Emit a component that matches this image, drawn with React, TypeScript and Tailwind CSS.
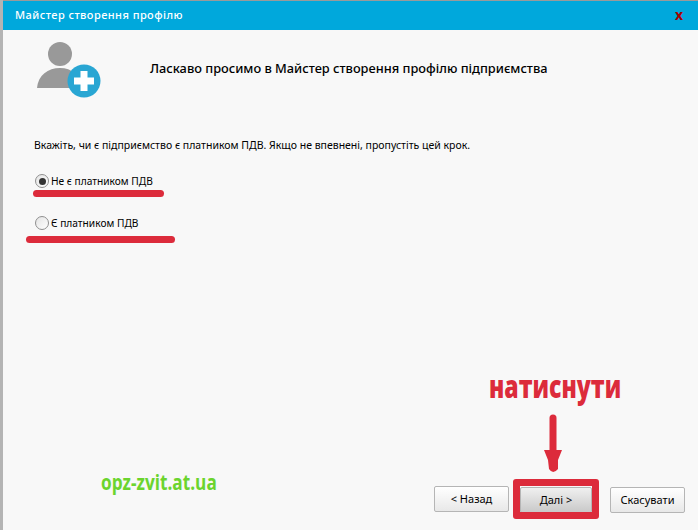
const font = { fontFamily: '"Noto Sans", sans-serif' }

function UserPlusIcon() {
  return (
    <svg width="66" height="60" viewBox="0 0 66 60" className="block">
      <circle cx="25" cy="14" r="12" fill="#999999" />
      <path d="M2 48 C3 35 13 28 25 28 C37 28 45 35 46 48 Z" fill="#999999" />
      <circle cx="49" cy="41" r="16.500" fill="#29a6d3" />
      <path d="M45.500 31 h7 v6.500 h6.500 v7 h-6.500 v6.500 h-7 v-6.500 h-6.500 v-7 h6.500 Z" fill="#ffffff" />
    </svg>
  )
}

function Radio({ checked, label }: { checked?: boolean; label: string }) {
  return (
    <label className="flex items-center gap-[2px] text-[10.2px] leading-[14px] text-black">
      <span className="w-[14px] h-[14px] rounded-full border border-[#8f8f8f] bg-gradient-to-br from-[#e4e4e4] to-white flex items-center justify-center">
        {checked && <span className="w-[7px] h-[7px] rounded-full bg-[#333333]" />}
      </span>
      {label}
    </label>
  )
}

function Button({ label, active }: { label: string; active?: boolean }) {
  return (
    <button
      className={`h-[26px] border border-[#b5b5b5] rounded-[2px] text-[11px] text-black ${
        active ? 'w-[72px] bg-gradient-to-b from-[#f0f0f0] to-[#c9c9c9]' : 'w-[75px] bg-gradient-to-b from-white to-[#e8e8e8]'
      }`}
    >
      {label}
    </button>
  )
}

export default function App() {
  return (
    <div className="relative w-[698px] h-[530px] overflow-hidden bg-[#f8f8f8] pl-[3px]" style={font}>
      <div className="absolute left-0 top-0 w-[3px] h-full bg-[#b4b4b4]" />

      <div className="h-[30px] border-t border-[#9a9a9a] bg-[#00a8dc] flex items-center justify-between pl-[12px] pr-[15px] text-white text-[11px] font-medium">
        <span className="tracking-[0.45px]">Майстер створення профілю</span>
        <span className="text-[#a50000] text-[14px] font-bold leading-none -mt-[2px]">x</span>
      </div>

      <div className="flex items-start pl-[32px] pt-[10px]">
        <UserPlusIcon />
        <h1 className="ml-[49px] mt-[19px] text-[12.8px] leading-[18px] font-medium text-black">
          Ласкаво просимо в Майстер створення профілю підприємства
        </h1>
      </div>

      <p className="ml-[31px] mt-[38px] text-[10.5px] leading-[14px] text-black">
        Вкажіть, чи є підприємство є платником ПДВ. Якщо не впевнені, пропустіть цей крок.
      </p>

      <div className="ml-[32px] mt-[22px] flex flex-col gap-[28px]">
        <Radio checked label="Не є платником ПДВ" />
        <Radio label="Є платником ПДВ" />
      </div>

      <div className="absolute left-[434px] bottom-[17px] flex items-center">
        <Button label="< Назад" />
        <div className="ml-[11px]">
          <Button label="Далі >" active />
        </div>
        <div className="ml-[18px]">
          <Button label="Скасувати" />
        </div>
      </div>

      {/* annotations drawn over the dialog */}
      <div className="absolute left-[33px] top-[190px] w-[131px] h-[7px] rounded-full bg-[#dc2b3b]" />
      <div className="absolute left-[26px] top-[236px] w-[149px] h-[7px] rounded-full bg-[#dc2b3b]" />
      <div className="absolute left-[513px] top-[479px] w-[86px] h-[40px] border-[7px] border-[#dc2b3b] rounded-[3px]" />
      <svg className="absolute left-[541px] top-[414px]" width="24" height="60" viewBox="0 0 24 60">
        <path d="M12 4 V40" stroke="#dc2b3b" strokeWidth="7" strokeLinecap="round" fill="none" />
        <path d="M3 36 L21 36 L17 46 L17 55 Q12 61 8 55 L7 46 Z" fill="#dc2b3b" />
      </svg>
      <div
        className="absolute left-[489px] top-[366px] origin-left scale-x-[0.72] text-[32px] leading-[40px] font-extrabold text-[#dc2b3b] whitespace-nowrap"
        style={{ fontFamily: '"Open Sans", sans-serif' }}
      >
        натиснути
      </div>
      <div
        className="absolute left-[101px] top-[468px] origin-left scale-x-[0.82] text-[21px] leading-[28px] font-bold text-[#6bd42e] whitespace-nowrap"
        style={{ fontFamily: '"Open Sans", sans-serif' }}
      >
        opz-zvit.at.ua
      </div>
    </div>
  )
}
